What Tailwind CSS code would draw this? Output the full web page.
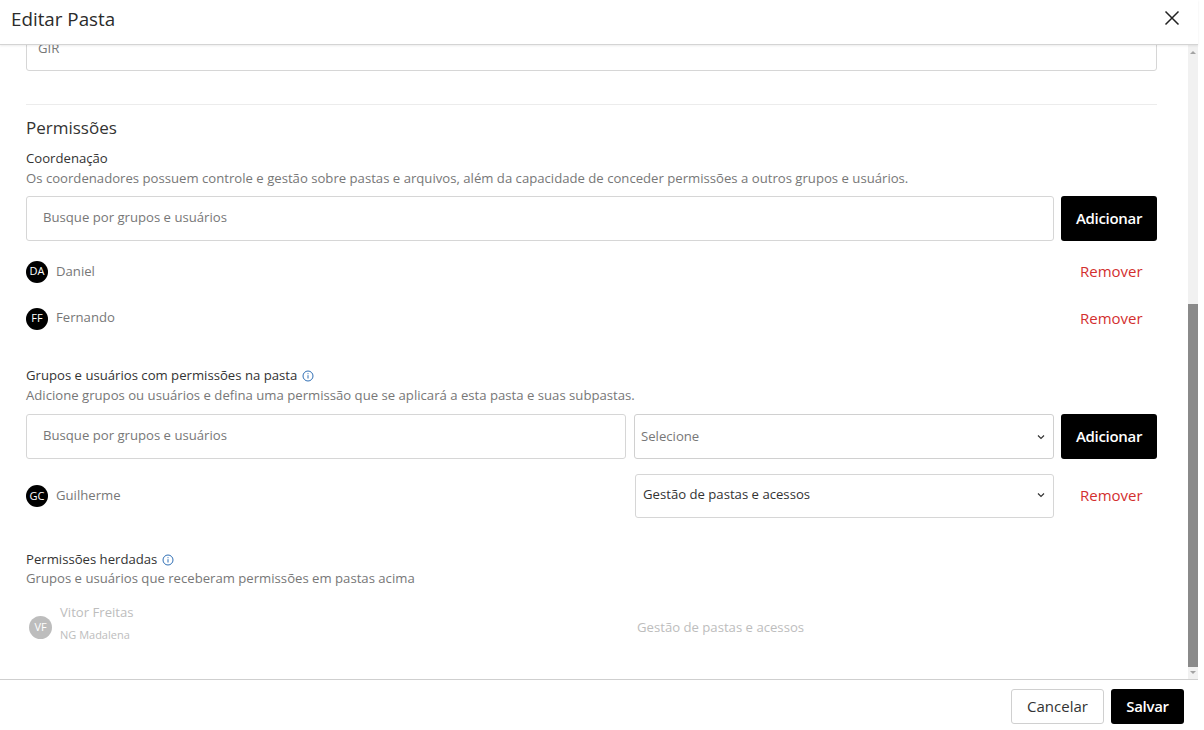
<!DOCTYPE html>
<html lang="pt-BR">
<head>
<meta charset="utf-8">
<title>Editar Pasta</title>
<script src="https://cdn.jsdelivr.net/npm/@tailwindcss/browser@4"></script>
</head>
<body class="bg-white font-['Open_Sans',sans-serif] overflow-hidden">
<div class="w-[1198px] h-[730px] flex flex-col bg-white">
  <header class="h-[45px] shrink-0 border-b border-[#d4d4d4] shadow-[0_1px_2px_rgba(0,0,0,0.08)] flex items-center justify-between pl-[11px] pr-[18px] relative z-10 bg-white">
    <h1 class="text-[18.8px] leading-[38px] text-[#2b2b2b] mb-[6px]">Editar Pasta</h1>
    <svg class="w-[16px] h-[16px] mb-[8px]" viewBox="0 0 16 16" fill="none" stroke="#222" stroke-width="1.5"><path d="M1.5 1.5l13 13M14.5 1.5l-13 13"/></svg>
  </header>
  <div class="h-[634px] flex overflow-hidden">
    <main class="w-[1188px] pl-[26px] pr-[31px] overflow-hidden">
      <div class="mt-[-19px] h-[45px] border border-[#d6d6d6] rounded-[3px] px-[11px] flex items-center text-[13.15px] text-[#777]">GIR</div>
      <div class="mt-[33px] border-t border-[#ececec]"></div>
      <h2 class="mt-[12px] text-[17px] leading-[22px] text-[#333]">Permissões</h2>
      <h3 class="mt-[10px] text-[13.15px] leading-[18px] font-medium text-[#333]">Coordenação</h3>
      <p class="mt-[2px] text-[13.15px] leading-[18px] text-[#777]">Os coordenadores possuem controle e gestão sobre pastas e arquivos, além da capacidade de conceder permissões a outros grupos e usuários.</p>
      <div class="mt-[9px] flex gap-[7px]">
        <div class="flex-1 h-[45px] border border-[#d6d6d6] rounded-[3px] pl-[16px] pb-[2px] flex items-center text-[13.15px] text-[#777]">Busque por grupos e usuários</div>
        <button class="w-[96px] h-[45px] bg-black text-white rounded-[3px] text-[15px] tracking-[-0.3px] font-semibold">Adicionar</button>
      </div>
      <div class="mt-[7px] h-[47px] flex items-center justify-between">
        <div class="flex items-center gap-[8px]">
          <span class="w-[22px] h-[22px] rounded-full bg-black text-white text-[11px] flex items-center justify-center">DA</span>
          <span class="text-[13.15px] text-[#777]">Daniel</span>
        </div>
        <span class="w-[77px] text-[15px] text-[#d32f2f] font-medium">Remover</span>
      </div>
      <div class="h-[47px] flex items-center justify-between">
        <div class="flex items-center gap-[8px]">
          <span class="w-[22px] h-[22px] rounded-full bg-black text-white text-[11px] flex items-center justify-center">FF</span>
          <span class="text-[13.15px] text-[#777] mb-[2px]">Fernando</span>
        </div>
        <span class="w-[77px] text-[15px] text-[#d32f2f] font-medium">Remover</span>
      </div>
      <div class="mt-[25px] flex items-center gap-[5px] h-[18px]">
        <h3 class="text-[13.15px] font-medium text-[#333]">Grupos e usuários com permissões na pasta</h3>
        <svg class="w-[12px] h-[12px]" viewBox="0 0 12 12" fill="none" stroke="#2f6fb5"><circle cx="6" cy="6" r="5"/><path d="M6 5.2v3.3M6 3.2v1"/></svg>
      </div>
      <p class="mt-[1px] text-[13.15px] leading-[18px] text-[#777]">Adicione grupos ou usuários e defina uma permissão que se aplicará a esta pasta e suas subpastas.</p>
      <div class="mt-[10px] flex gap-[7px]">
        <div class="w-[600px] h-[45px] border border-[#d6d6d6] rounded-[3px] pl-[16px] pb-[2px] flex items-center text-[13.15px] text-[#777]">Busque por grupos e usuários</div>
        <div class="ml-[1px] w-[420px] h-[45px] border border-[#d0d0d0] rounded-[3px] px-[6px] flex items-center justify-between text-[13.15px] text-[#777]">
          <span>Selecione</span>
          <svg class="w-[8px] h-[6px] mr-[2px]" viewBox="0 0 8 6" fill="none" stroke="#333" stroke-width="1.2"><path d="M1 1.5l3 3 3-3"/></svg>
        </div>
        <button class="w-[96px] h-[45px] bg-black text-white rounded-[3px] text-[15px] tracking-[-0.3px] font-semibold">Adicionar</button>
      </div>
      <div class="mt-[15px] flex items-center justify-between">
        <div class="flex items-center gap-[8px]">
          <span class="w-[22px] h-[22px] rounded-full bg-black text-white text-[11px] flex items-center justify-center">GC</span>
          <span class="text-[13.15px] text-[#777]">Guilherme</span>
        </div>
        <div class="flex items-center gap-[26px]">
          <div class="w-[419px] h-[44px] border border-[#d6d6d6] rounded-[3px] pl-[7px] pr-[6px] pb-[2px] flex items-center justify-between text-[13.15px] text-[#333]">
            <span>Gestão de pastas e acessos</span>
            <svg class="w-[8px] h-[6px] mr-[2px]" viewBox="0 0 8 6" fill="none" stroke="#333" stroke-width="1.2"><path d="M1 1.5l3 3 3-3"/></svg>
          </div>
          <span class="w-[77px] mb-[2px] text-[15px] text-[#d32f2f] font-medium">Remover</span>
        </div>
      </div>
      <div class="mt-[33px] flex items-center gap-[5px] h-[18px]">
        <h3 class="text-[13.15px] font-medium text-[#333]">Permissões herdadas</h3>
        <svg class="w-[12px] h-[12px]" viewBox="0 0 12 12" fill="none" stroke="#2f6fb5"><circle cx="6" cy="6" r="5"/><path d="M6 5.2v3.3M6 3.2v1"/></svg>
      </div>
      <p class="text-[13.15px] leading-[18px] text-[#777]">Grupos e usuários que receberam permissões em pastas acima</p>
      <div class="mt-[16px] flex items-center">
        <div class="w-[611px] flex items-center pl-[3px] gap-[8px]">
          <span class="mt-[10px] w-[23px] h-[23px] rounded-full bg-[#bdbdbd] text-white text-[11px] flex items-center justify-center">VF</span>
          <div class="flex flex-col">
            <span class="text-[13.15px] leading-[18px] text-[#bdbdbd]">Vitor Freitas</span>
            <span class="mt-[7px] text-[11px] leading-[14px] text-[#bdbdbd]">NG Madalena</span>
          </div>
        </div>
        <span class="mt-[10px] text-[13.15px] text-[#bdbdbd]">Gestão de pastas e acessos</span>
      </div>
    </main>
    <div class="w-[10px] h-full flex flex-col bg-[#f1f1f1]">
      <div class="h-[259px] flex justify-center pt-[6px]"><span class="w-0 h-0 border-x-[3px] border-x-transparent border-b-[3px] border-b-[#a3a3a3]"></span></div>
      <div class="h-[363px] bg-[#8a8a8a]"></div>
      <div class="flex-1 flex justify-center pt-[4px]"><span class="w-0 h-0 border-x-[3px] border-x-transparent border-t-[3px] border-t-[#a3a3a3]"></span></div>
    </div>
  </div>
  <footer class="flex-1 border-t border-[#cfcfcf] flex justify-end items-start gap-[7px] pt-[9px] pr-[14px]">
    <button class="w-[93px] h-[35px] border border-[#d0d0d0] rounded-[3px] text-[15px] text-[#333]">Cancelar</button>
    <button class="w-[73px] h-[35px] bg-black text-white rounded-[3px] text-[15px] tracking-[-0.3px] font-semibold">Salvar</button>
  </footer>
</div>
</body>
</html>
